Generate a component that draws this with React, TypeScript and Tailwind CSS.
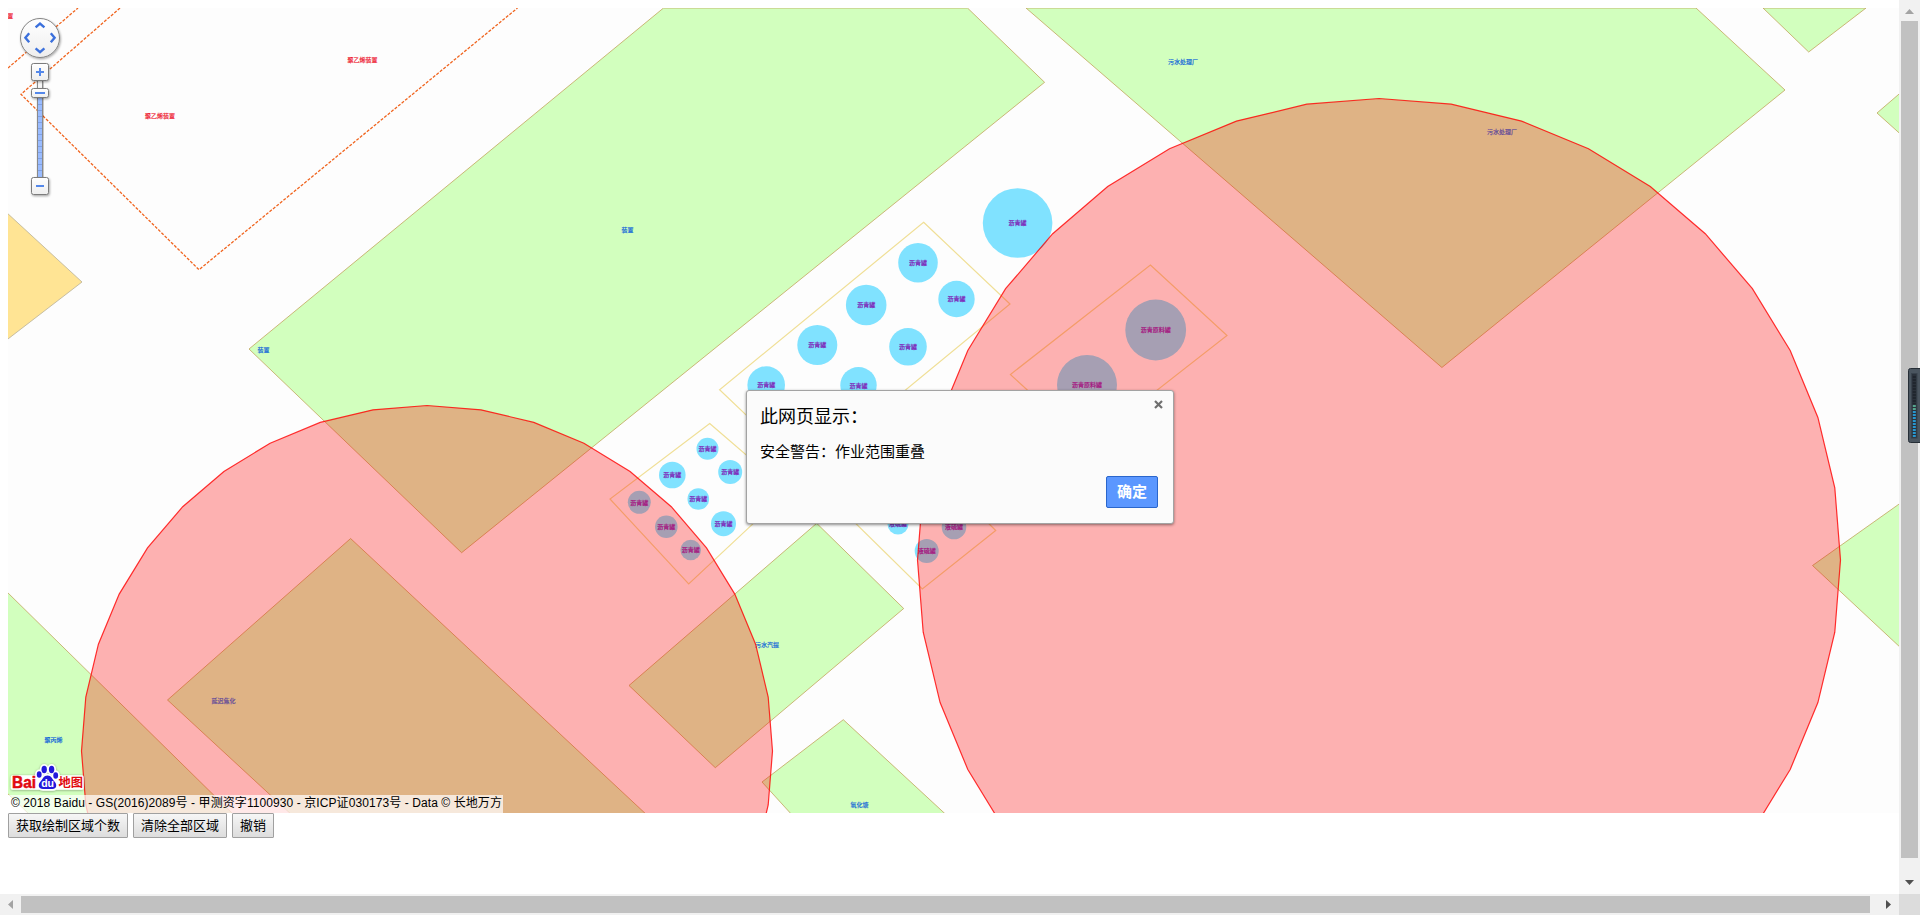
import React from 'react';

type Tank = { x: number; y: number; r: number; name: string };
type Label = { x: number; y: number; text: string; color: string };

const BLUE = '#1468d8';
const RED = '#ee2233';

const plots: string[] = [
  '249,349 663.5,8 967.5,8 1044.6,82.3 461.6,552.7',
  '1026,8 1696,8 1785,90 1441.9,367.5',
  '1763,8 1866,8 1808.7,52',
  '1877,113 1902,91.5 1902,135.5',
  '1812.5,565.5 1902,502 1902,649',
  '6,591 235,816 31,816 6,792',
  '350.6,538.5 167.5,700 293,816 648,816',
  '816.7,523.3 903.7,608.5 715.3,767.7 629,685.5',
  '843.3,719.7 762,782 793,816 947.5,816',
];

const yards: string[] = [
  '923.6,222.3 1010,304 806,472 719.6,389.7',
  '709.7,423.5 788,491 688.7,584 610,499',
  '1150.4,265 1227,335.5 1087,445 1010.4,374.5',
  '995.7,530.5 922.3,589 840,508 960,495',
];

const tanks: Tank[] = [
  { x: 1017.6, y: 223, r: 34.8, name: '沥青罐' },
  { x: 918, y: 262.7, r: 19.8, name: '沥青罐' },
  { x: 956.5, y: 299, r: 18.2, name: '沥青罐' },
  { x: 866.2, y: 305, r: 20.3, name: '沥青罐' },
  { x: 817.3, y: 345, r: 20, name: '沥青罐' },
  { x: 908, y: 346.8, r: 18.8, name: '沥青罐' },
  { x: 766.2, y: 385, r: 18.8, name: '沥青罐' },
  { x: 858.5, y: 385.2, r: 18.2, name: '沥青罐' },
  { x: 1155.7, y: 330, r: 30.4, name: '沥青原料罐' },
  { x: 1087, y: 385, r: 30, name: '沥青原料罐' },
  { x: 707.5, y: 448.7, r: 11, name: '沥青罐' },
  { x: 672.3, y: 475, r: 13.3, name: '沥青罐' },
  { x: 730.2, y: 472, r: 12, name: '沥青罐' },
  { x: 639.3, y: 502.3, r: 11.5, name: '沥青罐' },
  { x: 698.3, y: 499, r: 10.8, name: '沥青罐' },
  { x: 666.3, y: 526.7, r: 11.3, name: '沥青罐' },
  { x: 723.5, y: 523.7, r: 12.5, name: '沥青罐' },
  { x: 690.7, y: 550, r: 10.3, name: '沥青罐' },
  { x: 898, y: 524, r: 10.5, name: '液硫罐' },
  { x: 954, y: 527, r: 12.3, name: '液硫罐' },
  { x: 926.7, y: 551, r: 12, name: '液硫罐' },
];

const labels: Label[] = [
  { x: 1183, y: 62, text: '污水处理厂', color: BLUE },
  { x: 1502, y: 132, text: '污水处理厂', color: BLUE },
  { x: 627.5, y: 230, text: '装置', color: BLUE },
  { x: 263.5, y: 350, text: '装置', color: BLUE },
  { x: 767, y: 645, text: '污水汽提', color: BLUE },
  { x: 223.5, y: 701, text: '延迟焦化', color: BLUE },
  { x: 53.5, y: 740, text: '聚丙烯', color: BLUE },
  { x: 859.5, y: 805, text: '氧化塘', color: BLUE },
  { x: 362.5, y: 59.5, text: '聚乙烯装置', color: RED },
  { x: 160, y: 116, text: '聚乙烯装置', color: RED },
  { x: 10.2, y: 16, text: '置', color: RED },
];

/* Work ranges are drawn as forty-sided rings. */
function ring(cx: number, cy: number, r: number): string {
  return Array.from({ length: 40 }, (_, i) => {
    const a = (i * Math.PI) / 20;
    return `${(cx + r * Math.sin(a)).toFixed(1)},${(cy - r * Math.cos(a)).toFixed(1)}`;
  }).join(' ');
}

function MapCanvas() {
  return (
    <svg className="block h-[805px] w-[1891px]" viewBox="8 8 1891 805">
      <g fill="none" stroke="#f0641e" strokeWidth="1.3" strokeDasharray="3 1.5">
        <path d="M8 68 78 8" />
        <path d="M120 8 21 94.3 199 269.7 517.5 8" />
      </g>
      <polygon points="6,212 82,282 6,340.5" fill="#ffe494" stroke="#b9b199" strokeWidth="0.8" />
      <g fill="#d2ffbe" stroke="#c2a45c" strokeWidth="0.8">
        {plots.map((p) => (
          <polygon key={p} points={p} />
        ))}
      </g>
      <g fill="none" stroke="#f0df96" strokeWidth="1.2">
        {yards.map((p) => (
          <polygon key={p} points={p} />
        ))}
      </g>
      {tanks.map((t) => (
        <circle key={`${t.x}-${t.y}`} cx={t.x} cy={t.y} r={t.r} fill="#80e2ff" />
      ))}
      <g
        className="font-['Noto_Sans_CJK_SC',sans-serif] text-[6px]"
        textAnchor="middle"
        strokeWidth="0.2"
      >
        {tanks.map((t) => (
          <text key={`${t.x}-${t.y}`} x={t.x} y={t.y + 2.4} fill="#7d14b4" stroke="#7d14b4">
            {t.name}
          </text>
        ))}
        {labels.map((l) => (
          <text key={`${l.x}-${l.y}`} x={l.x} y={l.y + 2.2} fill={l.color} stroke={l.color}>
            {l.text}
          </text>
        ))}
      </g>
      <g fill="#ff0303" fillOpacity="0.3" stroke="#ff0000" strokeOpacity="0.8" strokeWidth="1.2">
        <polygon points={ring(427, 751, 345.5)} />
        <polygon points={ring(1379, 560, 461.5)} />
      </g>
    </svg>
  );
}

function NavigationControl() {
  return (
    <svg className="absolute left-[10px] top-[8px] h-[184px] w-[46px]" viewBox="18 16 46 184">
      <defs>
        <linearGradient id="knob" x1="0" y1="0" x2="0" y2="1">
          <stop offset="0" stopColor="#ffffff" />
          <stop offset="1" stopColor="#eeeeee" />
        </linearGradient>
        <filter id="lift" x="-20%" y="-20%" width="150%" height="150%">
          <feDropShadow dx="0.8" dy="1.2" stdDeviation="1" floodOpacity="0.35" />
        </filter>
      </defs>
      <circle cx="40" cy="38" r="19.5" fill="url(#knob)" stroke="#858585" filter="url(#lift)" />
      <g fill="none" stroke="#3b70dc" strokeWidth="2.4">
        <path d="M35.6 27.4 40 23.6 44.4 27.4" />
        <path d="M35.6 48.4 40 52.2 44.4 48.4" />
        <path d="M29.2 33.2 25.4 37.7 29.2 42.2" />
        <path d="M50.8 33.2 54.6 37.7 50.8 42.2" />
      </g>
      <rect x="37.5" y="80" width="5" height="98" fill="#f6f6f6" stroke="#8a8a8a" filter="url(#lift)" />
      <rect x="38" y="97" width="4" height="81" fill="#9abcff" />
      <path
        d="M38 104.5h4M38 110.5h4M38 116.5h4M38 122.5h4M38 128.5h4M38 134.5h4M38 140.5h4M38 146.5h4M38 152.5h4M38 158.5h4M38 164.5h4M38 170.5h4"
        stroke="#7fa0e2"
      />
      <g fill="url(#knob)" stroke="#7c7c7c" filter="url(#lift)">
        <rect x="31.5" y="63.5" width="17" height="17" rx="2" />
        <rect x="31.5" y="177.5" width="17" height="17" rx="2" />
        <rect x="31.5" y="88.5" width="17" height="9" rx="2" />
      </g>
      <path d="M36 72h8M40 68v8M36 186h8M35 93h10" stroke="#5488ea" strokeWidth="2" />
    </svg>
  );
}

function PawShape() {
  return (
    <>
      <ellipse cx="44.2" cy="769.5" rx="2.7" ry="3.7" />
      <ellipse cx="51.6" cy="769.5" rx="2.7" ry="3.7" />
      <ellipse cx="39.2" cy="774.5" rx="2.4" ry="3.2" />
      <ellipse cx="55.7" cy="775.5" rx="2.4" ry="3.2" />
      <path d="M47.5 775.5C43.5 775.5 43 779 40.5 781.5 37.5 784.5 38.5 789 43 789H52.5C56.5 789 57.5 784.5 54.5 781.5 52 779 51.5 775.5 47.5 775.5Z" />
    </>
  );
}

function BaiduLogo() {
  return (
    <svg className="absolute bottom-[20px] left-[1px] h-[32px] w-[78px]" viewBox="9 761 78 32">
      <defs>
        <filter id="halo" x="-10%" y="-20%" width="120%" height="140%">
          <feDropShadow dx="0" dy="0.5" stdDeviation="0.8" floodOpacity="0.4" />
        </filter>
      </defs>
      <g
        className="font-['Liberation_Sans','Noto_Sans_CJK_SC',sans-serif] font-bold"
        strokeLinejoin="round"
      >
        <g fill="#ffffff" stroke="#ffffff" strokeWidth="3.4" filter="url(#halo)">
          <PawShape />
          <rect x="12.5" y="777" width="26" height="11" />
          <rect x="57" y="777" width="25" height="11" />
        </g>
        <text
          x="12"
          y="788"
          fontSize="16.5"
          textLength="24"
          lengthAdjust="spacingAndGlyphs"
          fill="#e1090f"
          stroke="#e1090f"
          strokeWidth="0.5"
        >
          Bai
        </text>
        <text
          x="58.5"
          y="787"
          fontSize="12"
          textLength="24.5"
          lengthAdjust="spacingAndGlyphs"
          fill="#e1090f"
        >
          地图
        </text>
        <g fill="#2319dc">
          <PawShape />
        </g>
        <text x="41.2" y="787" fontSize="10.5" fill="#ffffff">
          du
        </text>
      </g>
    </svg>
  );
}

function ActionButton({ children }: { children: React.ReactNode }) {
  return (
    <button className="flex h-[25px] items-center rounded-[1px] border border-[#a0a0a0] bg-linear-to-b from-[#f6f6f6] to-[#dddddd] px-[7px] text-[13px] leading-none text-black">
      {children}
    </button>
  );
}

function AlertDialog() {
  return (
    <div
      role="dialog"
      className="absolute left-[746px] top-[390px] flex h-[134px] w-[428px] flex-col rounded-[3px] border border-[#a3a3a3] bg-[#fbfbfb] pl-[13px] pr-[15px] shadow-[0_1px_3px_rgba(0,0,0,0.45)]"
    >
      <div className="flex justify-between pt-[13px]">
        <h1 className="text-[18px] leading-[26px] text-black">此网页显示：</h1>
        <svg className="-mr-[5px] -mt-[4px] h-[9px] w-[9px]" viewBox="0 0 9 9">
          <path d="M1 1 8 8M8 1 1 8" stroke="#6f6f6f" strokeWidth="2.2" />
        </svg>
      </div>
      <p className="mt-[11px] text-[15px] leading-[22px] text-black">安全警告：作业范围重叠</p>
      <button className="mt-[13px] h-[32px] w-[52px] self-end rounded-[2px] border border-[#2a66cc] bg-[#5b97ff] text-[15px] font-bold leading-[28px] text-white">
        确定
      </button>
    </div>
  );
}

function VerticalScrollbar() {
  return (
    <div className="flex h-[894px] w-[21px] flex-col items-center bg-[#f1f1f1]">
      <svg className="h-[21px] w-[21px] shrink-0" viewBox="0 0 21 21">
        <path d="M6 14 10.5 9 15 14Z" fill="#a3a3a3" />
      </svg>
      <div className="h-[837px] w-[17px] shrink-0 bg-[#c1c1c1]" />
      <svg className="mt-[9px] h-[27px] w-[21px] shrink-0" viewBox="0 0 21 27">
        <path d="M6 13 10.5 18 15 13Z" fill="#505050" />
      </svg>
    </div>
  );
}

function HorizontalScrollbar() {
  return (
    <div className="flex h-[21px] w-full items-center bg-[#f1f1f1]">
      <svg className="h-[21px] w-[21px]" viewBox="0 0 21 21">
        <path d="M13 6 8 10.5 13 15Z" fill="#a3a3a3" />
      </svg>
      <div className="h-[17px] w-[1849px] bg-[#c1c1c1]" />
      <svg className="h-[21px] w-[29px]" viewBox="0 0 29 21">
        <path d="M16 6 21 10.5 16 15Z" fill="#505050" />
      </svg>
      <div className="h-[21px] w-[21px] bg-[#dcdcdc]" />
    </div>
  );
}

function LevelMeter() {
  return (
    <svg className="absolute left-[1908px] top-[368px] h-[75px] w-[12px]" viewBox="0 0 12 75">
      <rect x="0.5" y="0.5" width="16" height="74" rx="2" fill="#4a555f" stroke="#262e36" />
      <rect x="3.5" y="5.5" width="5.5" height="64.5" fill="#2b323b" stroke="#39434d" />
      <path d="M6.3 8V36" stroke="#20262e" strokeWidth="3" strokeDasharray="2 1" />
      <path d="M6.3 37V42" stroke="#55a58e" strokeWidth="3" strokeDasharray="2 1" />
      <path d="M6.3 43V70" stroke="#2796cf" strokeWidth="3" strokeDasharray="2 1" />
    </svg>
  );
}

export default function App() {
  return (
    <div className="relative flex h-[915px] w-[1920px] flex-col overflow-hidden bg-white font-['Liberation_Sans','Noto_Sans_CJK_SC',sans-serif]">
      <div className="flex h-[894px]">
        <main className="w-[1899px] pl-[8px] pt-[8px]">
          <div className="relative h-[805px] w-[1891px] overflow-hidden bg-[#fdfdfd]">
            <MapCanvas />
            <NavigationControl />
            <BaiduLogo />
            <div className="absolute bottom-0 left-0 h-[18px] w-[495px] whitespace-nowrap bg-white/70 pl-[3px] text-[12px] leading-[16px] tracking-[0.085px] text-black">
              © 2018 Baidu - GS(2016)2089号 - 甲测资字1100930 - 京ICP证030173号 - Data © 长地万方
            </div>
          </div>
          <div className="flex gap-[5px]">
            <ActionButton>获取绘制区域个数</ActionButton>
            <ActionButton>清除全部区域</ActionButton>
            <ActionButton>撤销</ActionButton>
          </div>
        </main>
        <VerticalScrollbar />
      </div>
      <HorizontalScrollbar />
      <AlertDialog />
      <LevelMeter />
    </div>
  );
}
